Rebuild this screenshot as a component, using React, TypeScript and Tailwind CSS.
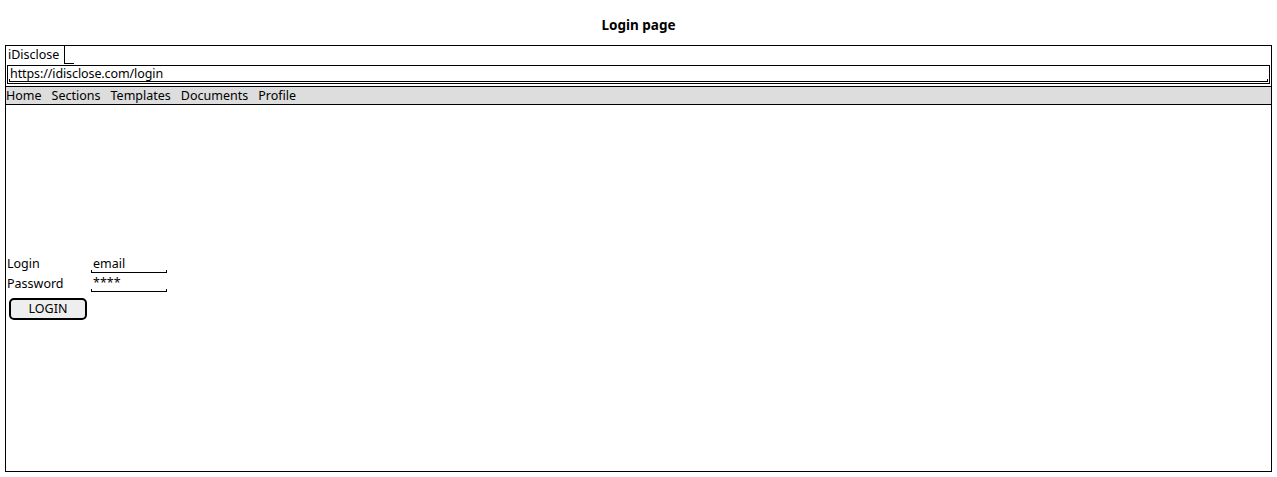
import React from 'react';

const menu = ['Home', 'Sections', 'Templates', 'Documents', 'Profile'];

function Field({ value }: { value: string }) {
  return (
    <div className="relative w-[76px] h-[18px] leading-[16px] pl-[2px]">
      {value}
      <span className="absolute left-0 right-0 bottom-[1px] h-[3px] border-l border-r border-b border-black" />
    </div>
  );
}

export default function App() {
  return (
    <div className="w-[1277px] h-[477px] bg-white text-black text-[12.5px] font-['Noto_Sans',sans-serif] leading-none">
      <div className="h-[45px] flex items-center justify-center pt-[6px] text-[13.5px] font-bold">Login page</div>

      <div className="ml-[5px] w-[1267px] h-[427px] border border-black flex flex-col">
        {/* tab strip */}
        <div className="flex h-[18px] shrink-0">
          <div className="border-r border-black pl-[2px] pr-[5px] leading-[17px]">iDisclose</div>
          <div className="w-[9px] border-b border-black" />
        </div>

        {/* address bar */}
        <div className="ml-[1px] mr-[1px] mt-[1px] h-[19px] border border-black relative shrink-0">
          <div className="pl-[2px] leading-[16px] tracking-[-0.1px]">https://idisclose.com/login</div>
          <span className="absolute left-[1px] right-[1px] bottom-[1px] h-[3px] border-l border-r border-b border-black" />
        </div>

        {/* menu bar */}
        <div className="mt-[2px] h-[19px] bg-[#dddddd] border-t border-b border-black flex gap-[10px] shrink-0 leading-[17px]">
          {menu.map((m) => (
            <span key={m}>{m}</span>
          ))}
        </div>

        {/* content */}
        <div className="flex-1 flex flex-col justify-center">
          <div className="flex flex-col pl-[1px]">
            <div className="flex h-[19px] items-center">
              <span className="w-[84px]">Login</span>
              <Field value="email" />
            </div>
            <div className="flex h-[20px] items-center">
              <span className="w-[84px]">Password</span>
              <Field value="****" />
            </div>
            <div className="pt-[4px] pb-[1px] pl-[2px]">
              <button className="w-[78px] h-[22px] rounded-[5px] border-2 border-black bg-[#eeeeee] leading-[18px] text-center">
                LOGIN
              </button>
            </div>
          </div>
        </div>
      </div>
    </div>
  );
}
